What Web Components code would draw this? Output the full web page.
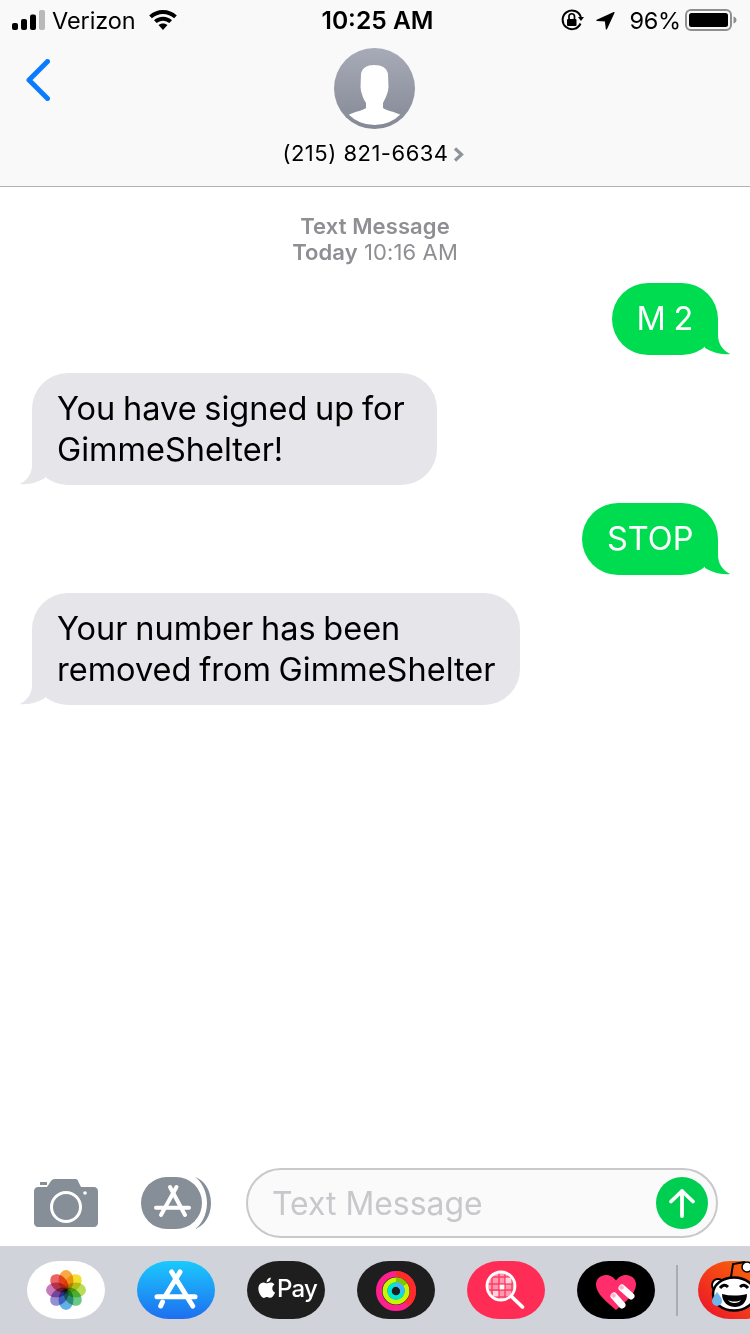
<!DOCTYPE html>
<html>
<head>
<meta charset="utf-8">
<title>Messages</title>
<style>
  html, body { margin: 0; padding: 0; background: #fff; }
  body { width: 750px; height: 1334px; overflow: hidden; font-family: Inter, "Liberation Sans", sans-serif; }
  sms-screen { width: 750px; height: 1334px; }
</style>
</head>
<body>
<sms-screen>
  <convo-header slot="top" number="(215) 821-6634"></convo-header>
  <thread-meta><b>Text Message</b><br><b>Today</b> 10:16 AM</thread-meta>
  <msg-bubble from="me">M 2</msg-bubble>
  <msg-bubble from="them">You have signed up for&nbsp;<br>GimmeShelter!</msg-bubble>
  <msg-bubble from="me">STOP</msg-bubble>
  <msg-bubble from="them">Your number has been<br>removed from GimmeShelter</msg-bubble>
  <composer-bar slot="bottom" placeholder="Text Message"></composer-bar>
  <app-drawer slot="bottom"></app-drawer>
</sms-screen>

<script>
function makeShadow(el, html) {
  el.attachShadow({ mode: "open" }).innerHTML = html;
}

class SmsScreen extends HTMLElement {
  connectedCallback() {
    makeShadow(this, `<style>
      :host { display: flex; flex-direction: column; overflow: hidden; }
      .thread { flex: 1; display: flex; flex-direction: column; gap: 18px; padding-top: 26px; }
    </style>
    <slot name="top"></slot>
    <div class="thread"><slot></slot></div>
    <slot name="bottom"></slot>`);
  }
}

class ConvoHeader extends HTMLElement {
  connectedCallback() {
    const number = this.getAttribute("number");
    makeShadow(this, `<style>
      :host { display: block; height: 187px; box-sizing: border-box; background: #f9f9f9; border-bottom: 1px solid #b2b2b2; color: #000; }
      .status { height: 40px; display: grid; grid-template-columns: 1fr auto 1fr; align-items: center; font-size: 23.5px; }
      .left { display: flex; align-items: center; padding-left: 12px; }
      .carrier { margin-left: 7px; margin-right: 13px; letter-spacing: -0.1px; }
      .time { font-weight: 600; font-size: 24.6px; padding-left: 5px; }
      .right { display: flex; align-items: center; justify-content: flex-end; padding-right: 13px; }
      .pct { margin-left: 14px; margin-right: 4px; letter-spacing: -0.2px; }
      .nav { height: 146px; display: grid; grid-template-columns: 1fr auto 1fr; }
      .back { display: block; margin: 19px 0 0 26px; }
      .who { display: flex; flex-direction: column; align-items: center; padding-top: 8px; margin-left: -2px; }
      .who-name { display: flex; align-items: center; margin-top: 9px; font-size: 22px; line-height: 30px; letter-spacing: 0.5px; }
      .who-name svg { margin-left: 4px; margin-right: 2px; margin-top: 2px; }
      svg { display: block; }
    </style>
    <div class="status">
      <div class="left">
        <svg width="33" height="20" viewBox="0 0 33 20"><rect x="0" y="13" width="6" height="7" rx="2" fill="#000"/><rect x="9" y="9" width="6" height="11" rx="2" fill="#000"/><rect x="18" y="4.500" width="6" height="15.500" rx="2" fill="#000"/><rect x="27" y="0" width="6" height="20" rx="2" fill="#b9b9b9"/></svg>
        <span class="carrier">Verizon</span>
        <svg width="28" height="20" viewBox="0 0 28 20"><path d="M14 0C8.700 0 4 2 .2 5.400l2.700 2.900C5.900 5.600 9.800 4 14 4s8.100 1.600 11.100 4.300l2.700-2.900C24 2 19.300 0 14 0z" fill="#000"/><path d="M14 6.800c-3.500 0-6.600 1.300-9 3.400l2.700 2.900c1.700-1.500 3.900-2.400 6.300-2.400s4.600.9 6.300 2.400l2.700-2.900c-2.400-2.100-5.500-3.400-9-3.400z" fill="#000"/><path d="M14 13.400c-1.800 0-3.400.7-4.500 1.700L14 20l4.500-4.900c-1.100-1-2.700-1.700-4.500-1.700z" fill="#000"/></svg>
      </div>
      <div class="time">10:25 AM</div>
      <div class="right">
        <svg width="23" height="22" viewBox="0 0 23 22"><path d="M19.500 14.500A9.300 9.300 0 1 1 19.800 8" fill="none" stroke="#000" stroke-width="2"/><path d="M17 8h6l-3 4z" fill="#000"/><rect x="6" y="10" width="9.500" height="7" rx="1" fill="#000"/><path d="M8 10V7.500a2.700 2.700 0 0 1 5.500 0V10" fill="none" stroke="#000" stroke-width="1.700"/></svg>
        <svg style="margin-left:12px" width="19" height="19" viewBox="0 0 19 19"><path d="M18 1.500L1 9.400 9.500 10l.9 8z" fill="#000" stroke="#000" stroke-width="1.200" stroke-linejoin="round"/></svg>
        <span class="pct">96%</span>
        <svg width="52" height="22" viewBox="0 0 52 22"><rect x="1" y="1" width="45" height="20" rx="5" fill="none" stroke="#8f8f8f" stroke-width="2"/><rect x="4" y="4" width="39" height="14" rx="2.500" fill="#000"/><path d="M48.500 7.500c1.700.4 3 1.800 3 3.500s-1.300 3.100-3 3.500z" fill="#8f8f8f"/></svg>
      </div>
    </div>
    <div class="nav">
      <svg class="back" width="24" height="42" viewBox="0 0 24 42"><path d="M21.500 2.500L3 21l18.500 18.500" fill="none" stroke="#0a7aff" stroke-width="5" stroke-linecap="round" stroke-linejoin="round"/></svg>
      <div class="who">
        <svg width="81" height="81" viewBox="0 0 81 81"><defs><linearGradient id="av" x1="0" y1="0" x2="0" y2="1"><stop offset="0" stop-color="#a7abb8"/><stop offset="1" stop-color="#858995"/></linearGradient><clipPath id="avc"><circle cx="40.500" cy="39.500" r="37.500"/></clipPath></defs><circle cx="40.500" cy="40.500" r="40.500" fill="url(#av)"/><path clip-path="url(#avc)" d="M14 67C22 63 28 63 32 60L32 55C29 51 28 46 27 43L26.500 39L27 26C28 20 33 17 40 17C48 17 53 20 54 26L54.500 39L54 43C53 47 51 51 49 55L49 60C53 63 59 63 67 67L67 82L14 82Z" fill="#fff"/></svg>
        <div class="who-name">${number}<svg width="11" height="17" viewBox="0 0 11 17"><path d="M2 2.500l6.500 6L2 14.500" fill="none" stroke="#8d949c" stroke-width="3.200"/></svg></div>
      </div>
      <div></div>
    </div>`);
  }
}

class ThreadMeta extends HTMLElement {
  connectedCallback() {
    makeShadow(this, `<style>
      :host { display: block; text-align: center; font-size: 22px; line-height: 26px; color: #8e8e93; letter-spacing: 0.1px; }
      ::slotted(b) { font-weight: 600; }
    </style><slot></slot>`);
  }
}

class MsgBubble extends HTMLElement {
  connectedCallback() {
    makeShadow(this, `<style>
      :host { display: flex; padding: 0 32px; }
      :host([from="me"]) { justify-content: flex-end; }
      .b { position: relative; border-radius: 36px; padding: 16px 25px 15px; font-size: 32.500px; line-height: 40.500px; word-spacing: -1.400px; white-space: nowrap; background: #e5e5ea; color: #000; }
      :host([from="me"]) .b { background: #00dc4f; color: #fff; padding: 16px 24.600px 15.500px; }
      .tail { position: absolute; bottom: 0; right: -12px; display: block; }
      :host([from="them"]) .tail { right: auto; left: -12px; transform: scaleX(-1); }
    </style>
    <div class="b"><slot></slot><svg class="tail" width="26" height="36" viewBox="0 0 26 36"><path d="M0 0L14 0L14 16C14 24 18 31 26 35C17 36 8 33 1 29Z" fill="currentColor"/></svg></div>`);
    this.shadowRoot.querySelector(".tail").style.color = this.getAttribute("from") === "me" ? "#00dc4f" : "#e5e5ea";
  }
}

class ComposerBar extends HTMLElement {
  connectedCallback() {
    const ph = this.getAttribute("placeholder");
    makeShadow(this, `<style>
      :host { display: flex; align-items: center; padding: 0 32px 8px 34px; height: 78px; box-sizing: border-box; }
      svg { display: block; flex: none; }
      .apps { margin-left: 43px; }
      .field { flex: 1; margin-left: 35px; height: 70px; box-sizing: border-box; border: 2.500px solid #c8c8cd; border-radius: 35px; background: #fafafa; display: flex; align-items: center; justify-content: space-between; padding: 0 8px 0 24px; color: #c7c7cc; font-size: 31.900px; }
    </style>
    <svg width="64" height="48" viewBox="0 0 64 48"><path d="M4 8h9l4-6C18 .5 20 0 21 0h20c1 0 3 .5 3 2l3 6h13c2.200 0 4 1.800 4 4v32c0 2.200-1.800 4-4 4H4c-2.200 0-4-1.800-4-4V12c0-2.200 1.800-4 4-4z" fill="#868e98"/><rect x="6" y="3" width="7" height="3" fill="#868e98"/><circle cx="32" cy="28" r="14.500" fill="none" stroke="#fff" stroke-width="3"/><circle cx="51" cy="14" r="1.800" fill="#fff"/></svg>
    <svg class="apps" width="70" height="52" viewBox="0 0 70 52"><path d="M54 0c9 3 16 13 16 26S63 49 54 52c6-4 12-14 12-26S60 4 54 0z" fill="#868e98"/><rect x="0" y="0" width="61" height="52" rx="26" fill="#868e98"/><g stroke="#fff" stroke-width="4" stroke-linecap="round" fill="none"><path d="M29 10L44 38"/><path d="M35.500 10L20 38"/><path d="M15 30.700H48"/></g></svg>
    <div class="field"><span>${ph}</span>
      <svg width="52" height="52" viewBox="0 0 52 52"><circle cx="26" cy="26" r="26" fill="#00ce50"/><path d="M26 39V14M15 24.500L26 14l11 10.500" fill="none" stroke="#fff" stroke-width="3.800" stroke-linecap="round" stroke-linejoin="round"/></svg>
    </div>`);
  }
}

const petals = ["#f9a132","#f4dc1c","#b3d94a","#5cc57c","#57a9e2","#8d84cf","#c26fb4","#e8555a"];

class AppDrawer extends HTMLElement {
  connectedCallback() {
    const flower = petals.map((c, i) =>
      `<ellipse cx="39" cy="19.500" rx="7.500" ry="10.500" fill="${c}" opacity=".92" style="mix-blend-mode:multiply" transform="rotate(${i * 45} 39 29)"/>`).join("");
    makeShadow(this, `<style>
      :host { display: flex; align-items: center; height: 88px; box-sizing: border-box; background: #d0d3da; padding: 0 0 0 27px; gap: 32px; }
      .pill { flex: none; width: 78px; height: 58px; border-radius: 32px / 29px; overflow: hidden; display: block; position: relative; }
      .pill svg { display: block; position: absolute; left: 0; top: 0; }
      .sep { flex: none; width: 2px; height: 51px; background: #a9acb3; margin: 0 -12px 0 -11px; }
      .pay { background: #1e1e1e; color: #fff; font-size: 24px; font-weight: 500; }
      .pay span { position: absolute; left: 30px; top: 10px; line-height: 36px; letter-spacing: -0.8px; }
    </style>
    <div class="pill" style="background:#fff"><svg width="78" height="58" viewBox="0 0 78 58">${flower}</svg></div>
    <div class="pill" style="background:linear-gradient(#1bc9fd,#1e6ef0)"><svg width="78" height="58" viewBox="0 0 78 58"><g stroke="#fff" stroke-width="5" stroke-linecap="round" fill="none"><path d="M34.700 11L55.700 45"/><path d="M43 11L29 34M25.500 41L23.700 45"/><path d="M20 35.700H58"/></g></svg></div>
    <div class="pill pay"><svg width="78" height="58" viewBox="0 0 78 58"><g transform="translate(9.500 16.500) scale(0.85)"><path fill="#fff" d="M12.152 6.896c-.948 0-2.415-1.078-3.960-1.040-2.040.027-3.910 1.183-4.961 3.014-2.117 3.675-.546 9.103 1.519 12.090 1.013 1.454 2.208 3.090 3.792 3.039 1.520-.065 2.090-.987 3.935-.987 1.831 0 2.350.987 3.960.948 1.637-.026 2.676-1.480 3.676-2.948 1.156-1.688 1.636-3.325 1.662-3.415-.039-.013-3.182-1.221-3.220-4.857-.026-3.040 2.480-4.494 2.597-4.559-1.429-2.090-3.623-2.324-4.390-2.376-2-.156-3.675 1.090-4.610 1.090zM15.530 3.830c.843-1.012 1.400-2.427 1.245-3.830-1.207.052-2.662.805-3.532 1.818-.780.896-1.454 2.338-1.273 3.714 1.338.104 2.715-.688 3.559-1.701"/></g></svg><span>Pay</span></div>
    <div class="pill" style="background:#1e1e1e"><svg width="78" height="58" viewBox="0 0 78 58"><circle cx="39" cy="30" r="17" fill="none" stroke="#ff1f8e" stroke-width="6"/><path d="M39 13A17 17 0 0 1 50 43" fill="none" stroke="#ff2a2a" stroke-width="6"/><circle cx="39" cy="30" r="11" fill="none" stroke="#c8f500" stroke-width="5"/><path d="M39 19A11 11 0 0 1 48 24" fill="none" stroke="#7fc800" stroke-width="5"/><circle cx="39" cy="30" r="6.500" fill="none" stroke="#00e6d2" stroke-width="4.500"/><path d="M39 23.500A6.500 6.500 0 0 1 45 32" fill="none" stroke="#3fb8ff" stroke-width="4.500"/></svg></div>
    <div class="pill" style="background:#ff2d55"><svg width="78" height="58" viewBox="0 0 78 58"><defs><clipPath id="lens"><circle cx="34" cy="25" r="13"/></clipPath></defs><circle cx="34" cy="25" r="13" fill="#ff9ab0"/><g clip-path="url(#lens)" stroke="#ff3c62" stroke-width="1.500"><path d="M20 16h28M20 23h28M20 29h28M20 36h28M25 11v28M32 11v28M38 11v28M45 11v28"/></g><rect x="32.700" y="23.700" width="4.600" height="4.600" fill="#fff"/><rect x="38.700" y="16.700" width="5.600" height="5.600" fill="#ffd3dd"/><rect x="26" y="30" width="5.300" height="5.300" fill="#ffd3dd"/><circle cx="34" cy="25" r="14" fill="none" stroke="#fff" stroke-width="2.800"/><path d="M44.500 35.500L55.500 46" stroke="#fff" stroke-width="3.800" stroke-linecap="round"/></svg></div>
    <div class="pill" style="background:#000"><svg width="78" height="58" viewBox="0 0 78 58"><path d="M39 49C30 41 19 33 19 23.500 19 17.500 24 14 29 14c4.500 0 8 2.500 10 5.500 2-3 5.500-5.500 10-5.500 5 0 10 3.500 10 9.500C59 33 48 41 39 49z" fill="#ff2d6b"/><path d="M37 35L45 44M45 27L54 35" stroke="#fff" stroke-width="7" stroke-linecap="round"/><circle cx="36.500" cy="34.500" r="2.300" fill="#ffb3cd"/><circle cx="44.500" cy="26.500" r="2.300" fill="#ffb3cd"/></svg></div>
    <div class="sep"></div>
    <div class="pill" style="background:linear-gradient(40deg,#ea0f2c,#ff7a00)"><svg width="78" height="58" viewBox="0 0 78 58"><path d="M33 16L35 3l12-2" fill="none" stroke="#000" stroke-width="2"/><circle cx="49" cy="6" r="5" fill="#fff" stroke="#000" stroke-width="1.500"/><circle cx="20" cy="24" r="6" fill="#fff" stroke="#000" stroke-width="2"/><ellipse cx="36" cy="33" rx="21" ry="16.500" fill="#fff" stroke="#000" stroke-width="2.500"/><path d="M22 27q4-5 8-1M42 26q4-4 8 1" fill="none" stroke="#000" stroke-width="3"/><path d="M24 33c8 2 16 2 25 0 0 9-6 13-12 13s-13-4-13-13z" fill="#000"/><path d="M30 39c4 2 9 2 13 0-2 4-11 4-13 0z" fill="#fff"/><path d="M19 31c3 4 5 6 5 9a5 5 0 0 1-10 0c0-3 3-6 5-9z" fill="#6fb4ee"/></svg></div>`);
  }
}

customElements.define("sms-screen", SmsScreen);
customElements.define("convo-header", ConvoHeader);
customElements.define("thread-meta", ThreadMeta);
customElements.define("msg-bubble", MsgBubble);
customElements.define("composer-bar", ComposerBar);
customElements.define("app-drawer", AppDrawer);
</script>
</body>
</html>
